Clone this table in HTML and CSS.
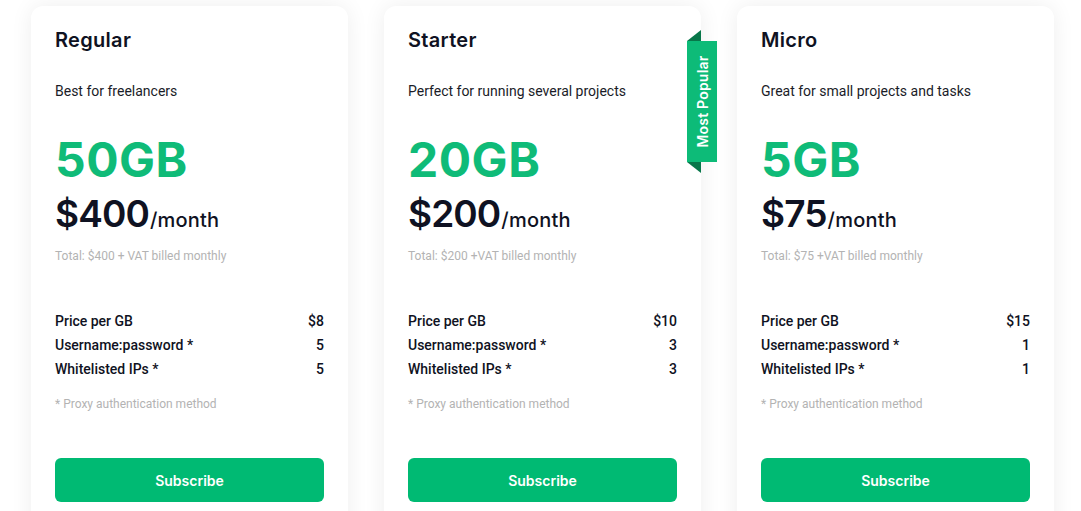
FILE: index.html
```html
<!DOCTYPE html>
<html>
<head>
<meta charset="utf-8">
<link rel="stylesheet" href="styles.css">
</head>
<body>
<div class="plans">
  <div class="card">
    <h2 class="title">Regular</h2>
    <p class="desc">Best for freelancers</p>
    <div class="gb">50GB</div>
    <div class="price">$400<span class="per">/month</span></div>
    <p class="total">Total: $400 + VAT billed monthly</p>
    <div class="rows">
      <div class="row"><span>Price per GB</span><span>$8</span></div>
      <div class="row"><span>Username:password *</span><span>5</span></div>
      <div class="row"><span>Whitelisted IPs *</span><span>5</span></div>
    </div>
    <p class="note">* Proxy authentication method</p>
    <button class="btn">Subscribe</button>
  </div>
  <div class="card">
    <div class="ribbon">
      <span class="fold fold-top"></span>
      <span class="ribbon-body"><span class="ribbon-text">Most Popular</span></span>
      <span class="fold fold-bottom"></span>
    </div>
    <h2 class="title">Starter</h2>
    <p class="desc">Perfect for running several projects</p>
    <div class="gb">20GB</div>
    <div class="price">$200<span class="per">/month</span></div>
    <p class="total">Total: $200 +VAT billed monthly</p>
    <div class="rows">
      <div class="row"><span>Price per GB</span><span>$10</span></div>
      <div class="row"><span>Username:password *</span><span>3</span></div>
      <div class="row"><span>Whitelisted IPs *</span><span>3</span></div>
    </div>
    <p class="note">* Proxy authentication method</p>
    <button class="btn">Subscribe</button>
  </div>
  <div class="card">
    <h2 class="title">Micro</h2>
    <p class="desc">Great for small projects and tasks</p>
    <div class="gb">5GB</div>
    <div class="price">$75<span class="per">/month</span></div>
    <p class="total">Total: $75 +VAT billed monthly</p>
    <div class="rows">
      <div class="row"><span>Price per GB</span><span>$15</span></div>
      <div class="row"><span>Username:password *</span><span>1</span></div>
      <div class="row"><span>Whitelisted IPs *</span><span>1</span></div>
    </div>
    <p class="note">* Proxy authentication method</p>
    <button class="btn">Subscribe</button>
  </div>
</div>
</body>
</html>
```
FILE: styles.css
```css
* { box-sizing: border-box; }
html, body {
  margin: 0;
  padding: 0;
  background: #ffffff;
  overflow: hidden;
}
body {
  font-family: Roboto, "Liberation Sans", sans-serif;
  color: #0f1222;
}
.plans {
  display: flex;
  gap: 36px;
  padding: 6px 0 0 31px;
}
.card {
  position: relative;
  width: 317px;
  height: 540px;
  background: #fff;
  border-radius: 12px;
  box-shadow: 0 0 22px rgba(0, 0, 0, 0.07);
  padding: 19px 24px 0 24px;
  display: flex;
  flex-direction: column;
}
.title {
  margin: 0;
  font-family: Inter, "Liberation Sans", sans-serif;
  font-weight: 600;
  font-size: 20px;
  line-height: 30px;
  letter-spacing: 0.3px;
}
.desc {
  margin: 26px 0 0;
  font-size: 14px;
  line-height: 20px;
  color: #1a1c28;
}
.gb {
  margin-top: 35px;
  font-family: Inter, "Liberation Sans", sans-serif;
  font-weight: 700;
  font-size: 48px;
  line-height: 48px;
  color: #0fbb78;
  letter-spacing: 0.5px;
}
.price {
  margin-top: 10px;
  height: 40px;
  display: flex;
  align-items: baseline;
  font-family: Inter, "Liberation Sans", sans-serif;
  font-weight: 600;
  font-size: 37px;
  line-height: 40px;
  letter-spacing: -0.9px;
  color: #0f1222;
}
.per {
  font-size: 20px;
  line-height: 20px;
  font-weight: 500;
  letter-spacing: 0.2px;
  margin-left: 1px;
}
.total {
  margin: 14px 0 0;
  font-size: 12px;
  line-height: 16px;
  color: #b3b3b3;
}
.rows {
  margin-top: 45px;
  display: flex;
  flex-direction: column;
}
.row {
  display: flex;
  justify-content: space-between;
  font-size: 14px;
  line-height: 24px;
  font-weight: 500;
  color: #0f1222;
}
.note {
  margin: 15px 0 0;
  font-size: 12px;
  line-height: 16px;
  color: #b3b3b3;
}
.btn {
  margin-top: 46px;
  height: 44px;
  width: 100%;
  border: none;
  border-radius: 6px;
  background: #00ba73;
  color: #fff;
  font-family: Inter, "Liberation Sans", sans-serif;
  font-weight: 600;
  font-size: 14px;
  cursor: pointer;
}
.ribbon {
  position: absolute;
  left: 303px;
  top: 24px;
  width: 30px;
  height: 143px;
}
.ribbon-body {
  position: absolute;
  left: 0;
  top: 11px;
  width: 30px;
  height: 121px;
  background: #0dbb78;
  display: flex;
  align-items: center;
  justify-content: center;
}
.ribbon-text {
  transform: rotate(-90deg);
  white-space: nowrap;
  color: #fff;
  font-family: Inter, "Liberation Sans", sans-serif;
  font-weight: 600;
  font-size: 14px;
  letter-spacing: 0.2px;
}
.fold {
  position: absolute;
  left: 0;
  width: 14px;
  height: 11px;
  background: #08774a;
}
.fold-top {
  top: 0;
  clip-path: polygon(100% 0, 100% 100%, 0 100%);
}
.fold-bottom {
  top: 132px;
  clip-path: polygon(0 0, 100% 0, 100% 100%);
}
```
